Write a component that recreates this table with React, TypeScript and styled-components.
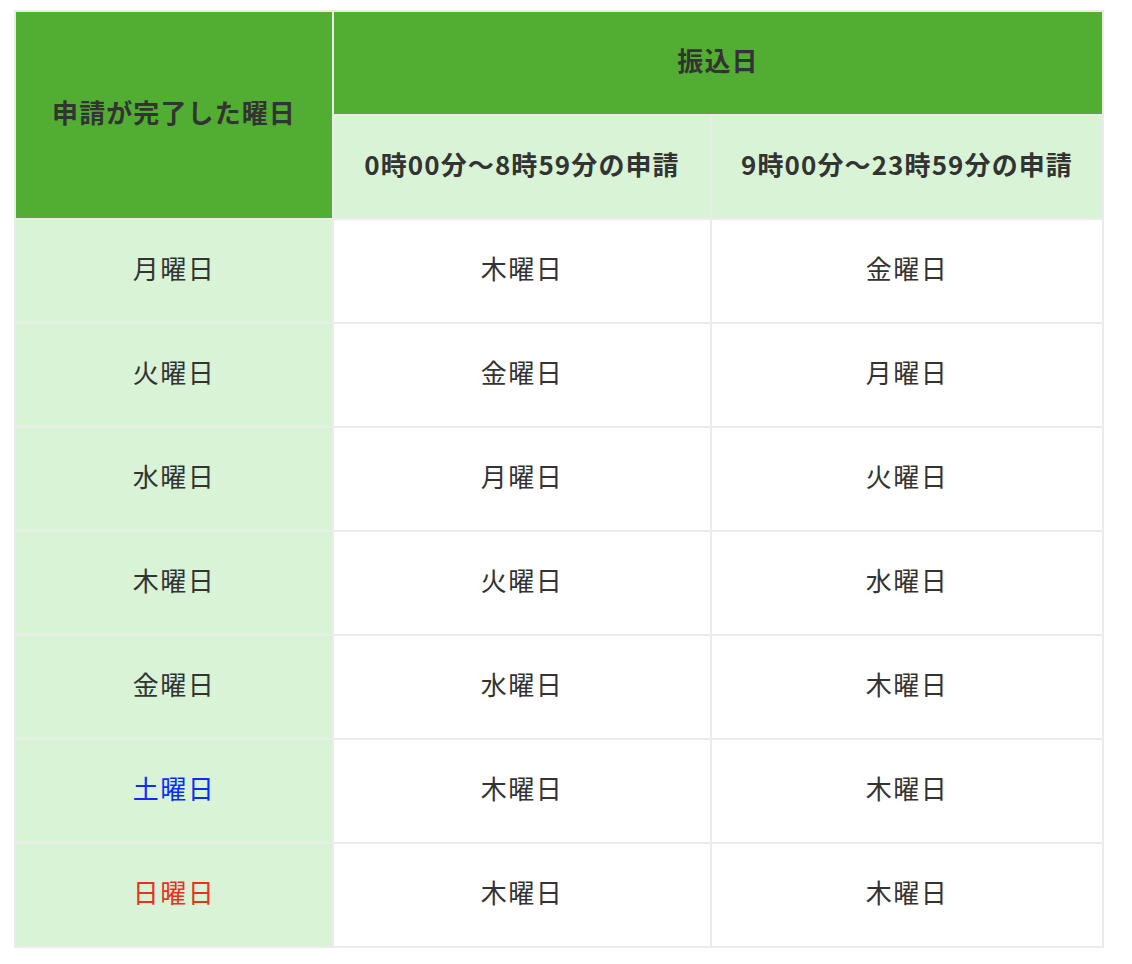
import React from "react";
import styled, { createGlobalStyle } from "styled-components";

const GlobalStyle = createGlobalStyle`
  html, body {
    margin: 0;
    padding: 0;
    background: #ffffff;
  }
  body {
    font-family: "Noto Sans CJK JP", "Noto Sans", sans-serif;
    color: #333333;
  }
`;

const Page = styled.div`
  padding: 10px 14px;
`;

const Table = styled.div`
  display: grid;
  grid-template-columns: 316px 376px 390px;
  grid-auto-rows: 102px;
  gap: 2px;
  padding: 2px;
  width: max-content;
  background: #ebebeb;
`;

type Tone = "main" | "sub" | "plain";

const bg: Record<Tone, string> = {
  main: "#52ae32",
  sub: "#d8f3d5",
  plain: "#ffffff",
};

const Cell = styled.div<{ $tone: Tone; $bold?: boolean; $color?: string; $rowSpan?: number; $colSpan?: number }>`
  display: flex;
  align-items: center;
  justify-content: center;
  padding-bottom: 7px;
  background: ${(p) => bg[p.$tone]};
  color: ${(p) => p.$color ?? "#333333"};
  font-size: 26px;
  line-height: 1;
  letter-spacing: ${(p) => (p.$bold ? "1.1px" : "1.5px")};
  font-weight: ${(p) => (p.$bold ? 700 : 400)};
  grid-row: ${(p) => (p.$rowSpan ? `span ${p.$rowSpan}` : "auto")};
  grid-column: ${(p) => (p.$colSpan ? `span ${p.$colSpan}` : "auto")};
  white-space: nowrap;
`;

type Row = { day: string; color?: string; early: string; late: string };

const rows: Row[] = [
  { day: "月曜日", early: "木曜日", late: "金曜日" },
  { day: "火曜日", early: "金曜日", late: "月曜日" },
  { day: "水曜日", early: "月曜日", late: "火曜日" },
  { day: "木曜日", early: "火曜日", late: "水曜日" },
  { day: "金曜日", early: "水曜日", late: "木曜日" },
  { day: "土曜日", color: "#0a2cff", early: "木曜日", late: "木曜日" },
  { day: "日曜日", color: "#e8321e", early: "木曜日", late: "木曜日" },
];

export default function App() {
  return (
    <Page>
      <GlobalStyle />
      <Table>
        <Cell $tone="main" $bold $rowSpan={2}>申請が完了した曜日</Cell>
        <Cell $tone="main" $bold $colSpan={2}>振込日</Cell>
        <Cell $tone="sub" $bold>0時00分〜8時59分の申請</Cell>
        <Cell $tone="sub" $bold>9時00分〜23時59分の申請</Cell>
        {rows.map((r) => (
          <React.Fragment key={r.day}>
            <Cell $tone="sub" $color={r.color}>{r.day}</Cell>
            <Cell $tone="plain">{r.early}</Cell>
            <Cell $tone="plain">{r.late}</Cell>
          </React.Fragment>
        ))}
      </Table>
    </Page>
  );
}
